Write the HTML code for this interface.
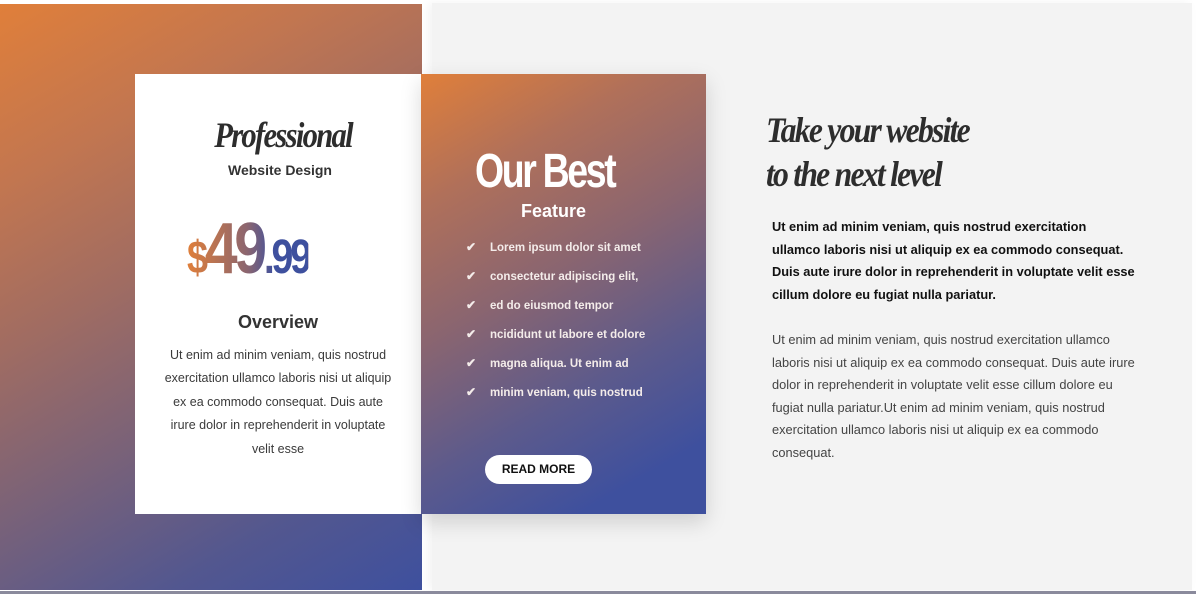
<!DOCTYPE html>
<html><head><meta charset="utf-8"><style>
*{margin:0;padding:0;box-sizing:border-box}
body{width:1196px;height:594px;background:#fff;position:relative;overflow:hidden;font-family:"Liberation Sans",sans-serif}
.left{position:absolute;left:0;top:4px;width:422px;height:586px;background:linear-gradient(150deg,#e07f3a 0%,#c27650 22%,#a06c62 42%,#7a6278 62%,#53578f 82%,#3e509e 100%)}
.right{position:absolute;left:432px;top:3px;width:760px;height:587px;background:#f3f3f3;box-shadow:-4px 0 10px rgba(0,0,0,.05)}
.bottom{position:absolute;left:0;top:591px;width:1196px;height:3px;background:#8a8a9c}
.card1{position:absolute;left:135px;top:74px;width:286px;height:440px;background:#fff;text-align:center;color:#333}
.card2{position:absolute;left:421px;top:74px;width:285px;height:440px;background:linear-gradient(150deg,#e07f3a 0%,#b0705a 22%,#8a6570 45%,#5c5a8c 68%,#3e509e 88%);box-shadow:0 8px 20px rgba(0,0,0,.15);color:#fff}
.script{font-family:"Liberation Serif",serif;font-style:italic;font-weight:bold;letter-spacing:-2px;color:#2d2d2d}
.li{position:absolute;left:45px;font-size:11.5px;font-weight:bold;color:#f4ecea}
.li b{display:inline-block;width:24px;font-size:12px}
</style></head><body>
<div class="left"></div>
<div class="right"></div>
<div class="bottom"></div>
<div class="card1">
 <div class="script" style="position:absolute;left:0;width:286px;top:40px;font-size:36px;padding-left:12px;transform:scaleX(.85)">Professional</div>
 <div style="position:absolute;left:0;width:286px;top:88px;font-size:14px;font-weight:bold;padding-left:4px">Website Design</div>
 <div style="position:absolute;left:52px;top:132px;font-size:72px;font-weight:bold;letter-spacing:-4px;transform:scaleX(.82);transform-origin:left;background:linear-gradient(90deg,#e07f3a,#8a6570 50%,#3e509e 72%);-webkit-background-clip:text;color:transparent;line-height:1.2"><span style="font-size:46px">$</span>49<span style="font-size:48px">.99</span></div>
 <div style="position:absolute;left:0;width:286px;top:238px;font-size:18px;font-weight:bold;">Overview</div>
 <div style="position:absolute;left:28px;width:230px;top:270px;font-size:12.5px;line-height:23.4px;color:#3a3a3a">Ut enim ad minim veniam, quis nostrud exercitation ullamco laboris nisi ut aliquip ex ea commodo consequat. Duis aute irure dolor in reprehenderit in voluptate velit esse</div>
</div>
<div class="card2">
 <div style="position:absolute;left:54px;top:72px;font-size:48px;font-weight:bold;letter-spacing:-3px;transform:scaleX(.78);transform-origin:left;line-height:1.1">Our Best</div>
 <div style="position:absolute;left:100px;top:127px;font-size:18px;font-weight:bold">Feature</div>
 <div class="li" style="top:166px"><b>✔</b>Lorem ipsum dolor sit amet</div>
 <div class="li" style="top:195px"><b>✔</b>consectetur adipiscing elit,</div>
 <div class="li" style="top:224px"><b>✔</b>ed do eiusmod tempor</div>
 <div class="li" style="top:253px"><b>✔</b>ncididunt ut labore et dolore</div>
 <div class="li" style="top:282px"><b>✔</b>magna aliqua. Ut enim ad</div>
 <div class="li" style="top:311px"><b>✔</b>minim veniam, quis nostrud</div>
 <div style="position:absolute;left:64px;top:381px;width:107px;height:29px;border-radius:15px;background:#fff;color:#111;font-size:12px;font-weight:bold;text-align:center;line-height:29px">READ MORE</div>
</div>
<div class="script" style="position:absolute;left:766px;top:108px;font-size:36px;line-height:44px;transform:scaleX(.88);transform-origin:left">Take your website<br>to the next level</div>
<div style="position:absolute;left:772px;top:216px;width:365px;font-size:12.8px;font-weight:bold;line-height:22.6px;color:#111">Ut enim ad minim veniam, quis nostrud exercitation ullamco laboris nisi ut aliquip ex ea commodo consequat. Duis aute irure dolor in reprehenderit in voluptate velit esse cillum dolore eu fugiat nulla pariatur.</div>
<div style="position:absolute;left:772px;top:329px;width:365px;font-size:12.8px;line-height:22.6px;color:#444">Ut enim ad minim veniam, quis nostrud exercitation ullamco laboris nisi ut aliquip ex ea commodo consequat. Duis aute irure dolor in reprehenderit in voluptate velit esse cillum dolore eu fugiat nulla pariatur.Ut enim ad minim veniam, quis nostrud exercitation ullamco laboris nisi ut aliquip ex ea commodo consequat.</div>
</body></html>
